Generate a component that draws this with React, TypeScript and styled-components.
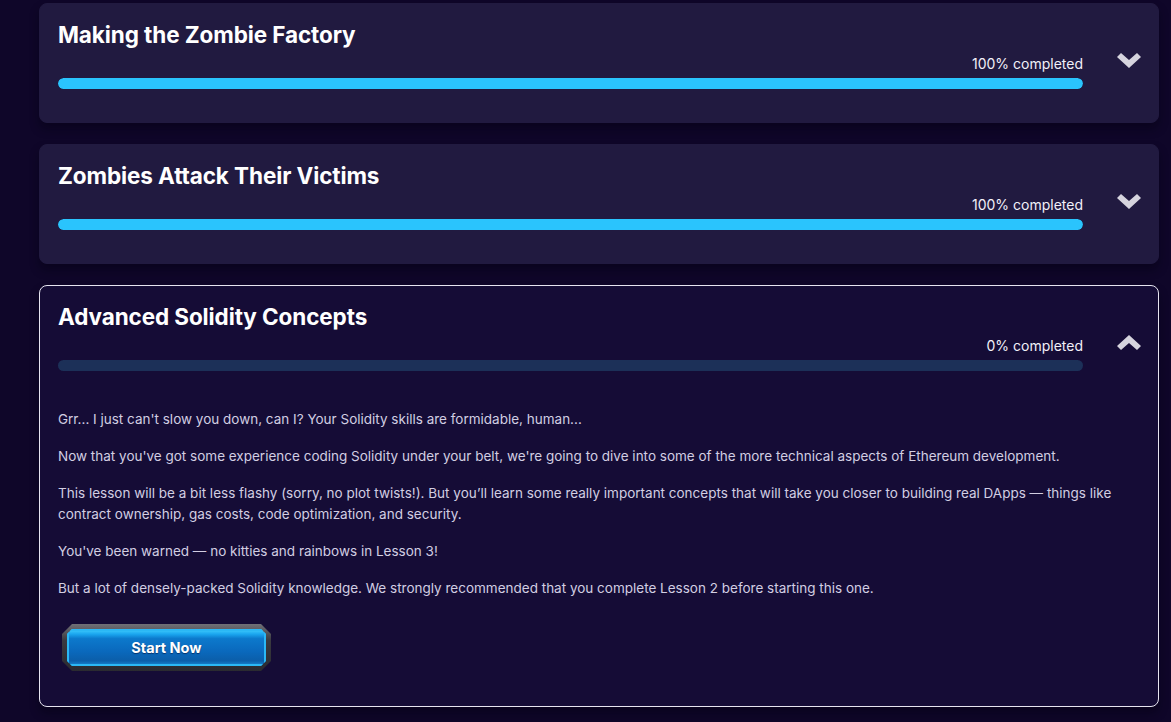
import React from "react";
import styled, { createGlobalStyle } from "styled-components";

const GlobalStyle = createGlobalStyle`
  html, body {
    margin: 0;
    padding: 0;
    background: #0f0629;
  }
  body {
    font-family: Inter, "Noto Sans", sans-serif;
    color: #ffffff;
  }
`;

const Page = styled.div`
  display: flex;
  flex-direction: column;
  gap: 21px;
  padding: 3px 12px 16px 39px;
  min-height: 722px;
  box-sizing: border-box;
`;

const Card = styled.div<{ $open?: boolean }>`
  background: ${(p) => (p.$open ? "#150c36" : "#211a40")};
  border: 1px solid ${(p) => (p.$open ? "#e6e4f0" : "#211a40")};
  border-radius: 8px;
  box-shadow: 0 6px 10px rgba(5, 2, 18, 0.45);
  padding: 15px 0 33px 18px;
`;

const Header = styled.div`
  display: flex;
  align-items: flex-start;
`;

const HeaderMain = styled.div`
  flex: 1;
  display: flex;
  flex-direction: column;
`;

const Title = styled.h2`
  margin: 0;
  font-size: 22.5px;
  line-height: 31px;
  font-weight: 700;
  letter-spacing: -0.1px;
  color: #ffffff;
`;

const Completed = styled.div`
  align-self: flex-end;
  margin-top: 5px;
  font-size: 14px;
  line-height: 18px;
  color: #f2f0f8;
`;

const Track = styled.div`
  margin-top: 5px;
  height: 11px;
  border-radius: 6px;
  background: #1c3058;
  overflow: hidden;
`;

const Fill = styled.div`
  height: 100%;
  border-radius: 6px;
  background: #2ac4fd;
`;

const Toggle = styled.button`
  flex: 0 0 auto;
  width: 75px;
  margin-top: 34px;
  padding: 0 0 0 34px;
  border: 0;
  background: none;
  color: #d6d4de;
  display: flex;
  cursor: pointer;
`;

const Body = styled.div`
  padding: 38px 30px 0 0;
`;

const Para = styled.p`
  margin: 0 0 16px;
  font-size: 13.5px;
  line-height: 21px;
  color: #d2cee2;
`;

const ButtonFrame = styled.button`
  margin: 25px 0 2px 4px;
  width: 209px;
  height: 47px;
  padding: 5px;
  border: 0;
  box-sizing: border-box;
  cursor: pointer;
  background: linear-gradient(180deg, #707076 0%, #3a3a40 35%, #2a2a30 100%);
  clip-path: polygon(10px 0, calc(100% - 10px) 0, 100% 10px, 100% calc(100% - 10px), calc(100% - 10px) 100%, 10px 100%, 0 calc(100% - 10px), 0 10px);
  display: flex;
`;

const ButtonFace = styled.span`
  flex: 1;
  display: flex;
  align-items: center;
  justify-content: center;
  background:
    linear-gradient(180deg, #45d0ff 0%, #1aa6ef 14%, #0c79cc 26%, #0a69bd 60%, #0b5ea9 86%, #1a8ad8 100%);
  clip-path: polygon(5px 0, calc(100% - 5px) 0, 100% 5px, 100% calc(100% - 5px), calc(100% - 5px) 100%, 5px 100%, 0 calc(100% - 5px), 0 5px);
  box-shadow: inset 0 0 0 2px #2bb8f5;
  color: #ffffff;
  font-family: Inter, "Noto Sans", sans-serif;
  font-size: 14.5px;
  font-weight: 700;
  text-shadow: 0 1px 1px rgba(0, 20, 60, 0.6);
`;

const Chevron = ({ up }: { up?: boolean }) => (
  <svg width="24" height="15" viewBox="0 0 24 15" style={{ transform: up ? "scaleY(-1)" : undefined }}>
    <polygon points="0,4 4,0 12,7 20,0 24,4 12,15" fill="currentColor" />
  </svg>
);

type Lesson = {
  title: string;
  progress: number;
  open?: boolean;
  paragraphs?: string[];
};

const lessons: Lesson[] = [
  { title: "Making the Zombie Factory", progress: 100 },
  { title: "Zombies Attack Their Victims", progress: 100 },
  {
    title: "Advanced Solidity Concepts",
    progress: 0,
    open: true,
    paragraphs: [
      "Grr... I just can't slow you down, can I? Your Solidity skills are formidable, human...",
      "Now that you've got some experience coding Solidity under your belt, we're going to dive into some of the more technical aspects of Ethereum development.",
      "This lesson will be a bit less flashy (sorry, no plot twists!). But you\u2019ll learn some really important concepts that will take you closer to building real DApps \u2014 things like contract ownership, gas costs, code optimization, and security.",
      "You've been warned \u2014 no kitties and rainbows in Lesson 3!",
      "But a lot of densely-packed Solidity knowledge. We strongly recommended that you complete Lesson 2 before starting this one.",
    ],
  },
];

const LessonCard = ({ lesson }: { lesson: Lesson }) => (
  <Card $open={lesson.open}>
    <Header>
      <HeaderMain>
        <Title>{lesson.title}</Title>
        <Completed>{lesson.progress}% completed</Completed>
        <Track>
          <Fill style={{ width: `${lesson.progress}%` }} />
        </Track>
      </HeaderMain>
      <Toggle aria-label="toggle">
        <Chevron up={lesson.open} />
      </Toggle>
    </Header>
    {lesson.open && (
      <Body>
        {lesson.paragraphs?.map((text, i) => (
          <Para key={i}>{text}</Para>
        ))}
        <ButtonFrame>
          <ButtonFace>Start Now</ButtonFace>
        </ButtonFrame>
      </Body>
    )}
  </Card>
);

const App = () => (
  <>
    <GlobalStyle />
    <Page>
      {lessons.map((lesson) => (
        <LessonCard key={lesson.title} lesson={lesson} />
      ))}
    </Page>
  </>
);

export default App;
